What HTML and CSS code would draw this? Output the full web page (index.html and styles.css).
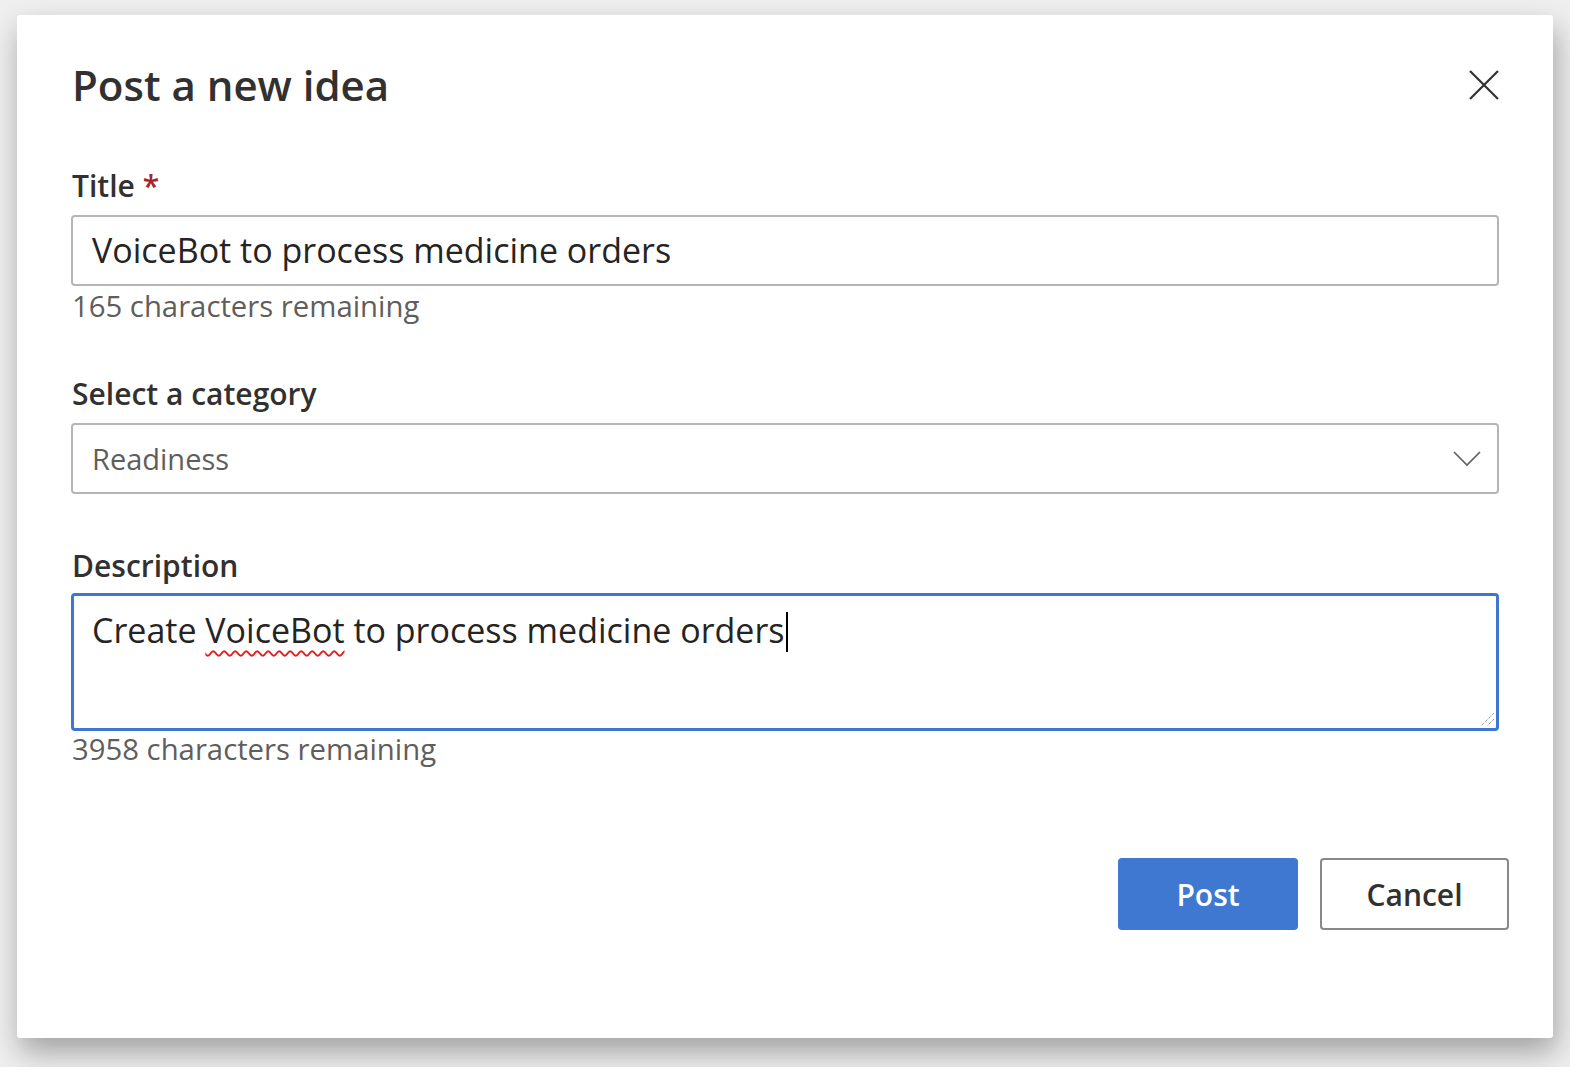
FILE: index.html
```html
<!DOCTYPE html>
<html lang="en">
<head>
<meta charset="utf-8">
<title>Post a new idea</title>
<link rel="stylesheet" href="styles.css">
</head>
<body>
<div class="dialog">
  <div class="header">
    <h1 class="heading">Post a new idea</h1>
    <button class="close" aria-label="Close">
      <svg width="30" height="30" viewBox="0 0 30 30"><path d="M1 1L29 29M29 1L1 29" stroke="#323130" stroke-width="2.2" fill="none"/></svg>
    </button>
  </div>

  <div class="field field-title">
    <label class="label">Title <span class="req">*</span></label>
    <div class="box input">VoiceBot to process medicine orders</div>
    <div class="hint">165 characters remaining</div>
  </div>

  <div class="field field-cat">
    <label class="label">Select a category</label>
    <div class="box select">
      <span class="select-text">Readiness</span>
      <svg class="chev" width="28" height="16" viewBox="0 0 28 16"><path d="M1 1L14 14L27 1" stroke="#605e5c" stroke-width="1.6" fill="none"/></svg>
    </div>
  </div>

  <div class="field field-desc">
    <label class="label">Description</label>
    <div class="box textarea">
      <span>Create <span class="spell">VoiceBot</span> to process medicine orders</span><span class="caret"></span>
      <svg class="grip" width="16" height="16" viewBox="0 0 16 16"><path d="M15 2L2 15M15 8L8 15" stroke="#7a7a7a" stroke-width="1" stroke-dasharray="1 1" fill="none"/></svg>
    </div>
    <div class="hint">3958 characters remaining</div>
  </div>

  <div class="actions">
    <button class="btn btn-primary">Post</button>
    <button class="btn btn-default">Cancel</button>
  </div>
</div>
</body>
</html>
```

FILE: styles.css
```css
html, body {
  margin: 0;
  padding: 0;
}
body {
  background: #efefef;
  font-family: "Open Sans", "Noto Sans", sans-serif;
  color: #323130;
  width: 1570px;
  height: 1067px;
  overflow: hidden;
}
.dialog {
  box-sizing: border-box;
  margin: 15px 0 0 17px;
  width: 1536px;
  height: 1023px;
  background: #fff;
  border-radius: 3px;
  box-shadow: 3px 14px 30px rgba(0,0,0,0.33);
  padding: 0 55px 0 55px;
  display: flex;
  flex-direction: column;
}
.header {
  display: flex;
  align-items: center;
  justify-content: space-between;
  height: 140px;
  flex-shrink: 0;
}
.heading {
  margin: 0;
  font-size: 42px;
  font-weight: 600;
  line-height: 56px;
}
.close {
  border: 0;
  background: none;
  padding: 0;
  width: 30px;
  height: 30px;
  margin-right: -1px;
  display: flex;
}
.field {
  display: flex;
  flex-direction: column;
  flex-shrink: 0;
}
.field-title {
  margin-top: 11px;
}
.label {
  font-size: 30px;
  font-weight: 600;
  line-height: 40px;
  height: 40px;
  margin-bottom: 9px;
}
.req {
  color: #a4262c;
}
.box {
  box-sizing: border-box;
  width: 1428px;
  margin-left: -1px;
  border: 2px solid #b5b5b5;
  border-radius: 4px;
  background: #fff;
  font-size: 34px;
  padding: 0 19px;
  flex-shrink: 0;
}
.input {
  height: 71px;
  line-height: 67px;
  color: #252423;
}
.hint {
  font-size: 29.3px;
  line-height: 40px;
  color: #605e5c;
}
.field-cat {
  margin-top: 48px;
}
.select {
  height: 71px;
  display: flex;
  align-items: center;
  justify-content: space-between;
  color: #605e5c;
  font-size: 29px;
  padding-right: 16px;
}
.field-desc {
  margin-top: 52px;
}
.field-desc .label {
  margin-bottom: 7px;
}
.textarea {
  position: relative;
  height: 138px;
  border: 3px solid #3e77d0;
  padding: 0 18px;
  line-height: 68px;
  color: #252423;
}
.spell {
  text-decoration: underline wavy #e02020;
  text-decoration-thickness: 1.6px;
  text-underline-offset: 7px;
  text-decoration-skip-ink: none;
}
.caret {
  display: inline-block;
  width: 2px;
  height: 40px;
  background: #000;
  vertical-align: -9px;
  margin-left: 1px;
}
.grip {
  position: absolute;
  right: 1px;
  bottom: 1px;
}
.field-desc .hint {
  margin-top: -2px;
}
.actions {
  display: flex;
  justify-content: flex-end;
  gap: 22px;
  margin-top: 89px;
  margin-right: -11px;
  flex-shrink: 0;
}
.btn {
  box-sizing: border-box;
  height: 72px;
  font-family: "Open Sans", "Noto Sans", sans-serif;
  font-size: 30px;
  font-weight: 600;
  border-radius: 4px;
  cursor: pointer;
}
.btn-primary {
  width: 180px;
  background: #3f78d0;
  border: 0;
  color: #fff;
}
.btn-default {
  width: 189px;
  background: #fff;
  border: 2px solid #8a8886;
  color: #323130;
}
```
